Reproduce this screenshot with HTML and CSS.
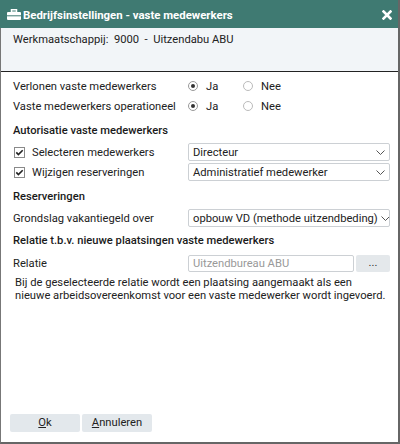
FILE: index.html
```html
<!DOCTYPE html>
<html lang="nl">
<head>
<meta charset="utf-8">
<title>Bedrijfsinstellingen - vaste medewerkers</title>
<link rel="stylesheet" href="styles.css">
</head>
<body>
<div class="dialog">
  <div class="titlebar">
    <svg class="title-icon" width="14" height="11" viewBox="0 0 14 11">
      <rect x="4.5" y="0.75" width="5" height="2.5" fill="none" stroke="#fff" stroke-width="1.5"/>
      <rect x="0" y="3" width="14" height="8" rx="1" fill="#fff"/>
      <rect x="0" y="6.3" width="14" height="1" fill="#3f7a72"/>
    </svg>
    <span class="title-text">Bedrijfsinstellingen - vaste medewerkers</span>
    <svg class="close" width="10" height="10" viewBox="0 0 10 10">
      <path d="M1.5 1.5 L8.5 8.5 M8.5 1.5 L1.5 8.5" stroke="#fff" stroke-width="2.6" stroke-linecap="square"/>
    </svg>
  </div>
  <div class="header">Werkmaatschappij:&nbsp; 9000&nbsp; -&nbsp; Uitzendabu ABU</div>
  <div class="content">
    <div class="row">
      <span class="label">Verlonen vaste medewerkers</span>
      <div class="radios">
        <span class="radio checked"></span><span class="radio-label">Ja</span>
        <span class="radio"></span><span class="radio-label">Nee</span>
      </div>
    </div>
    <div class="row">
      <span class="label">Vaste medewerkers operationeel</span>
      <div class="radios">
        <span class="radio checked"></span><span class="radio-label">Ja</span>
        <span class="radio"></span><span class="radio-label">Nee</span>
      </div>
    </div>

    <div class="heading heading-auth">Autorisatie vaste medewerkers</div>
    <div class="row row-field">
      <span class="label check-label">
        <svg class="checkbox" width="11" height="11" viewBox="0 0 11 11">
          <rect x="0.5" y="0.5" width="10" height="10" fill="#fff" stroke="#8a8a8a"/>
          <path d="M2.3 5.4 L4.4 7.6 L8.7 3.2" fill="none" stroke="#222" stroke-width="1.6"/>
        </svg>
        Selecteren medewerkers
      </span>
      <div class="select"><span>Directeur</span>
        <svg class="chev" width="9" height="5" viewBox="0 0 9 5"><path d="M0.5 0.5 L4.5 4.5 L8.5 0.5" fill="none" stroke="#555" stroke-width="1"/></svg>
      </div>
    </div>
    <div class="row row-field row-gap">
      <span class="label check-label">
        <svg class="checkbox" width="11" height="11" viewBox="0 0 11 11">
          <rect x="0.5" y="0.5" width="10" height="10" fill="#fff" stroke="#8a8a8a"/>
          <path d="M2.3 5.4 L4.4 7.6 L8.7 3.2" fill="none" stroke="#222" stroke-width="1.6"/>
        </svg>
        Wijzigen reserveringen
      </span>
      <div class="select"><span>Administratief medewerker</span>
        <svg class="chev" width="9" height="5" viewBox="0 0 9 5"><path d="M0.5 0.5 L4.5 4.5 L8.5 0.5" fill="none" stroke="#555" stroke-width="1"/></svg>
      </div>
    </div>

    <div class="heading heading-res">Reserveringen</div>
    <div class="row row-field">
      <span class="label">Grondslag vakantiegeld over</span>
      <div class="select"><span>opbouw VD (methode uitzendbeding)</span>
        <svg class="chev" width="9" height="5" viewBox="0 0 9 5"><path d="M0.5 0.5 L4.5 4.5 L8.5 0.5" fill="none" stroke="#555" stroke-width="1"/></svg>
      </div>
    </div>

    <div class="heading heading-rel">Relatie t.b.v. nieuwe plaatsingen vaste medewerkers</div>
    <div class="row row-field row-rel">
      <span class="label">Relatie</span>
      <div class="lookup">
        <div class="input">Uitzendbureau ABU</div>
        <div class="dots">...</div>
      </div>
    </div>
    <p class="note">Bij de geselecteerde relatie wordt een plaatsing aangemaakt als een nieuwe arbeidsovereenkomst voor een vaste medewerker wordt ingevoerd.</p>
  </div>
  <div class="footer">
    <div class="btn"><u>O</u>k</div>
    <div class="btn"><u>A</u>nnuleren</div>
  </div>
</div>
</body>
</html>
```

FILE: styles.css
```css
html, body {
  margin: 0;
  padding: 0;
  background: #fff;
}

body {
  font-family: Roboto, "Liberation Sans", sans-serif;
  font-size: 11.2px;
  color: #222;
}

.dialog {
  width: 400px;
  height: 444px;
  box-sizing: border-box;
  border-left: 1px solid #777;
  border-right: 2px solid #666;
  border-bottom: 2px solid #666;
  display: flex;
  flex-direction: column;
  background: #fff;
}

.titlebar {
  height: 28px;
  background: #3f7a72;
  color: #fff;
  display: flex;
  align-items: center;
  padding-left: 7px;
  padding-right: 6px;
  margin-left: -1px;
}

.title-icon {
  margin-top: 1px;
  flex: none;
}

.title-text {
  font-weight: bold;
  font-size: 11.4px;
  margin-left: 2px;
  flex: 1;
  padding-top: 2px;
}

.close {
  flex: none;
  margin-top: 1px;
}

.header {
  height: 44px;
  box-sizing: border-box;
  background: #f2f5f8;
  border-bottom: 1px solid #222;
  padding: 5px 0 0 12px;
  line-height: 14px;
  white-space: nowrap;
}

.content {
  flex: 1;
  padding: 4px 8px 0 12px;
}

.row {
  display: grid;
  grid-template-columns: 175px minmax(0, 1fr);
  align-items: center;
  height: 20px;
}

.row-field {
  height: 18px;
}

.row-gap {
  margin-top: 2px;
}

.radios {
  display: flex;
  align-items: center;
}

.radio {
  width: 10px;
  height: 10px;
  box-sizing: border-box;
  border: 1px solid #bbb;
  border-radius: 50%;
  display: flex;
  align-items: center;
  justify-content: center;
  flex: none;
}

.radio.checked {
  border-color: #999;
}

.radio.checked::after {
  content: "";
  width: 4px;
  height: 4px;
  border-radius: 50%;
  background: #333;
}

.radio-label {
  margin-left: 8px;
  width: 37px;
}

.heading {
  font-weight: 500;
  height: 20px;
  line-height: 20px;
  color: #1a1a1a;
}

.heading-auth {
  margin-top: 5px;
  margin-bottom: 2px;
}

.heading-res {
  margin-top: 6px;
  margin-bottom: 2px;
}

.heading-rel {
  margin-top: 4px;
  margin-bottom: 4px;
}

.check-label {
  display: flex;
  align-items: center;
}

.checkbox {
  margin-left: 1px;
  margin-right: 7px;
  flex: none;
}

.select {
  height: 18px;
  box-sizing: border-box;
  border: 1px solid #ccd0d4;
  border-radius: 2px;
  display: flex;
  align-items: center;
  justify-content: space-between;
  padding: 0 4px 0 4px;
  white-space: nowrap;
  overflow: hidden;
  background: #fff;
}

.chev {
  flex: none;
  margin-left: 3px;
}

.row-rel {
  height: 17px;
}

.lookup {
  display: flex;
  gap: 2px;
  height: 17px;
}

.input {
  flex: 1;
  box-sizing: border-box;
  border: 1px solid #ccd0d4;
  border-radius: 2px;
  color: #999;
  padding-left: 4px;
  display: flex;
  align-items: center;
}

.dots {
  width: 34px;
  background: #e4e8eb;
  border-radius: 2px;
  text-align: center;
  line-height: 15px;
  color: #333;
}

.note {
  margin: 4px 0 0 2px;
  line-height: 13px;
}

.footer {
  display: flex;
  gap: 2px;
  padding: 0 0 10px 9px;
}

.btn {
  width: 70px;
  height: 18px;
  line-height: 18px;
  background: #e3e8ec;
  border-radius: 2px;
  text-align: center;
  color: #222;
}
```
